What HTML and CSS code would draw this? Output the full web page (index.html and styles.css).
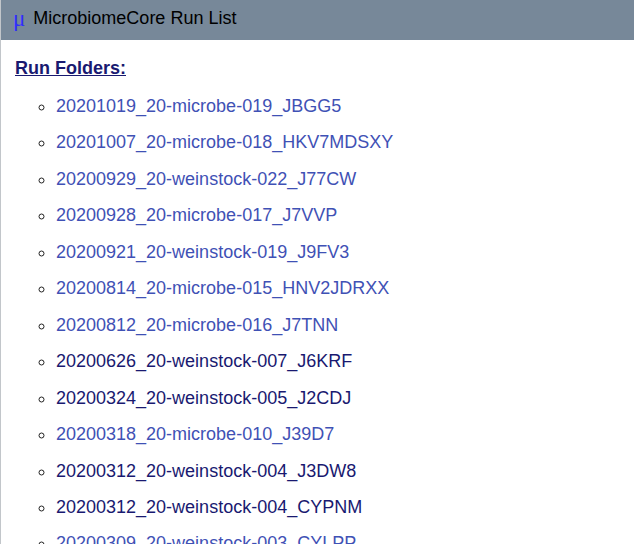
FILE: index.html
```html
<!DOCTYPE html>
<html lang="en">
<head>
<meta charset="utf-8">
<title>MicrobiomeCore Run List</title>
<link rel="stylesheet" href="styles.css">
</head>
<body>
<div class="page">
  <header class="topbar">
    <span class="logo">μ</span>
    <span class="title">MicrobiomeCore Run List</span>
  </header>
  <main class="content">
    <h3 class="section-title">Run Folders:</h3>
    <ul class="runs">
      <li><a class="run" href="#">20201019_20-microbe-019_JBGG5</a></li>
      <li><a class="run" href="#">20201007_20-microbe-018_HKV7MDSXY</a></li>
      <li><a class="run" href="#">20200929_20-weinstock-022_J77CW</a></li>
      <li><a class="run" href="#">20200928_20-microbe-017_J7VVP</a></li>
      <li><a class="run" href="#">20200921_20-weinstock-019_J9FV3</a></li>
      <li><a class="run" href="#">20200814_20-microbe-015_HNV2JDRXX</a></li>
      <li><a class="run" href="#">20200812_20-microbe-016_J7TNN</a></li>
      <li><a class="run visited" href="#">20200626_20-weinstock-007_J6KRF</a></li>
      <li><a class="run visited" href="#">20200324_20-weinstock-005_J2CDJ</a></li>
      <li><a class="run" href="#">20200318_20-microbe-010_J39D7</a></li>
      <li><a class="run visited" href="#">20200312_20-weinstock-004_J3DW8</a></li>
      <li><a class="run visited" href="#">20200312_20-weinstock-004_CYPNM</a></li>
      <li><a class="run" href="#">20200309_20-weinstock-003_CYLPP</a></li>
    </ul>
  </main>
</div>
</body>
</html>
```

FILE: styles.css
```css
html, body {
  margin: 0;
  padding: 0;
  background: #ffffff;
}

body {
  font-family: "Liberation Sans", Arial, Helvetica, sans-serif;
  overflow: hidden;
}

.page {
  border-left: 1px solid #c2c6ca;
  min-height: 544px;
}

.topbar {
  height: 40px;
  background: #778899;
  display: flex;
  align-items: center;
  padding: 0 0 3px 12px;
  box-sizing: border-box;
  gap: 8px;
}

.logo {
  font-family: "Liberation Serif", "DejaVu Serif", serif;
  font-size: 23px;
  line-height: 1;
  color: #2e2eff;
}

.title {
  font-size: 18px;
  color: #000000;
}

.content {
  padding-left: 14px;
}

.section-title {
  margin: 18px 0 9px 0;
  font-size: 18px;
  font-weight: bold;
  color: #191970;
  text-decoration: underline;
}

.runs {
  list-style: circle;
  margin: 0;
  padding-left: 41px;
  font-size: 18px;
  line-height: 36.45px;
}

.runs li::marker {
  color: #222222;
}

.run {
  color: #3f51b5;
  text-decoration: none;
}

.run.visited {
  color: #191970;
}
```
